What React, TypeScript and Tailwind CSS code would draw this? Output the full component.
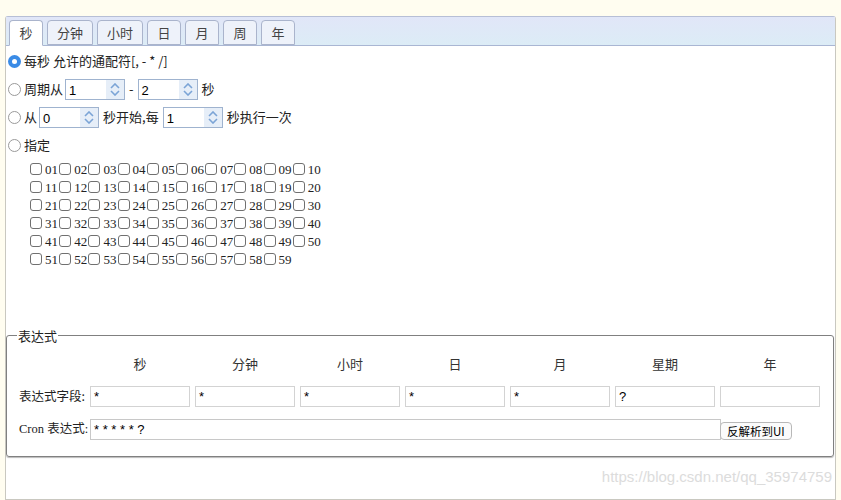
import React from 'react';

const serif = { fontFamily: '"Liberation Serif", "Noto Sans CJK SC", serif' };

const Radio = ({ checked }: { checked?: boolean }) =>
  checked ? (
    <span className="inline-flex w-[13px] h-[13px] rounded-full bg-[#3a8be6] items-center justify-center shrink-0">
      <span className="w-[5px] h-[5px] rounded-full bg-white" />
    </span>
  ) : (
    <span className="inline-block w-[13px] h-[13px] rounded-full border border-[#9a9a9a] bg-white shrink-0" />
  );

const Spinner = ({ value }: { value: string }) => (
  <span className="inline-flex w-[60px] h-[21px] border border-[#9fb3cf] bg-white items-stretch">
    <span className="flex-1 pl-[3px] pt-[3px] text-[13px] leading-[16px] text-black" style={{ fontFamily: '"Liberation Sans", Arial, sans-serif' }}>
      {value}
    </span>
    <span className="w-[18px] bg-[#e6eef8] flex flex-col items-center justify-center gap-[1px]">
      <svg width="10" height="6" viewBox="0 0 10 6"><path d="M1 5 L5 1 L9 5" fill="none" stroke="#7ba4d6" strokeWidth="1.6" /></svg>
      <svg width="10" height="6" viewBox="0 0 10 6"><path d="M1 1 L5 5 L9 1" fill="none" stroke="#7ba4d6" strokeWidth="1.6" /></svg>
    </span>
  </span>
);

const tabs = [
  { t: '秒', w: 'w-[34px]' },
  { t: '分钟', w: 'w-[46px]' },
  { t: '小时', w: 'w-[46px]' },
  { t: '日', w: 'w-[34px]' },
  { t: '月', w: 'w-[34px]' },
  { t: '周', w: 'w-[34px]' },
  { t: '年', w: 'w-[34px]' },
];

const rows = [0, 1, 2, 3, 4, 5].map((r) =>
  Array.from({ length: 10 }, (_, c) => r * 10 + c + 1).filter((n) => n <= 59)
);

const cols = ['秒', '分钟', '小时', '日', '月', '星期', '年'];
const fields = ['*', '*', '*', '*', '*', '?', ''];

export default function App() {
  return (
    <div className="w-[841px] h-[500px] bg-[#fffdf0] pt-4 overflow-hidden text-[13px] text-[#222]" style={{ fontFamily: '"Noto Sans CJK SC", "Liberation Sans", sans-serif' }}>
      <div className="ml-[5px] w-[831px] h-[484px] bg-white border border-[#c9c8c0] border-t-[#b7bfd6] rounded-t-[3px] flex flex-col">
        {/* tab header */}
        <div className="h-[29px] bg-gradient-to-b from-[#e1e6f8] to-[#dcecf6] border-b border-[#a9b6d3] flex items-end pl-[3px] gap-[4px]">
          {tabs.map((tab, i) => (
            <div
              key={tab.t}
              className={`${tab.w} h-[25px] rounded-t-[4px] border border-[#aab4cc] flex items-center justify-center text-[13px] text-[#444] ${
                i === 0 ? 'bg-white border-b-white -mb-px h-[26px]' : 'bg-[#eef2fa]'
              }`}
            >
              {tab.t}
            </div>
          ))}
        </div>

        <div className="pl-[2px] pt-[1px] flex flex-col">
          <div className="h-[28px] flex items-center gap-[3px]">
            <Radio checked />
            <span>每秒 允许的通配符[, - * /]</span>
          </div>
          <div className="h-[28px] flex items-center gap-[1px]">
            <Radio />
            <span className="mr-[1px] ml-[2px]">周期从</span>
            <Spinner value="1" />
            <span className="mx-[3px]">-</span>
            <Spinner value="2" />
            <span className="ml-[3px]">秒</span>
          </div>
          <div className="h-[28px] flex items-center gap-[1px]">
            <Radio />
            <span className="mr-[1px] ml-[2px]">从</span>
            <Spinner value="0" />
            <span className="mx-[3px]">秒开始,每</span>
            <Spinner value="1" />
            <span className="ml-[3px]">秒执行一次</span>
          </div>
          <div className="h-[28px] flex items-center gap-[3px]">
            <Radio />
            <span>指定</span>
          </div>

          <div className="pl-[22px] pt-[1px] flex flex-col text-[13px]" style={serif}>
            {rows.map((row, ri) => (
              <div key={ri} className="h-[18px] flex items-center">
                {row.map((n) => (
                  <div key={n} className="w-[29.2px] flex items-center shrink-0">
                    <span className="w-[12px] h-[12px] rounded-[3px] border border-[#707070] bg-white shrink-0" />
                    <span className="ml-[3px] leading-none">{String(n).padStart(2, '0')}</span>
                  </div>
                ))}
              </div>
            ))}
          </div>
        </div>

        {/* expression fieldset */}
        <fieldset className="mt-[58px] w-[828px] border-[1.5px] border-[#808080] rounded-[3px] pl-[12px] pr-[12px] pb-[16px] pt-[8px] shadow-[0_1px_1px_#bbb]">
          <legend className="-ml-[2px] px-[1px] text-[13px] text-[#222]">表达式</legend>
          <div className="grid grid-cols-[66px_repeat(7,100px)] gap-x-[5px] items-center text-[13px]">
            <div />
            {cols.map((c) => (
              <div key={c} className="h-[20px] text-center text-[#333]">{c}</div>
            ))}
            <div className="h-[21px] mt-[12px] flex items-center whitespace-nowrap text-[12.5px]">表达式字段:</div>
            {fields.map((f, i) => (
              <div key={i} className="mt-[12px] h-[21px] border border-[#d3d3d3] bg-white pl-[3px] text-[13px] leading-[19px] text-black" style={{ fontFamily: '"Liberation Sans", Arial, sans-serif' }}>
                {f}
              </div>
            ))}
          </div>
          <div className="mt-[12px] flex items-center">
            <span className="w-[71px] shrink-0 whitespace-nowrap text-[12.5px]" style={serif}>Cron 表达式:</span>
            <div className="w-[631px] h-[21px] border border-[#c8c8c8] bg-white pl-[3px] leading-[19px] text-black text-[13px]" style={{ fontFamily: '"Liberation Sans", Arial, sans-serif' }}>
              * * * * * ?
            </div>
            <button className="-ml-px mt-[3px] h-[18px] px-[6px] rounded-[4px] border border-[#b8b8b8] bg-[#fbfbfb] text-[11.5px] leading-[16px] text-black whitespace-nowrap">
              反解析到UI
            </button>
          </div>
        </fieldset>

        <div className="flex justify-end pr-[3px] pt-[10px]">
          <span className="text-[15px] leading-[20px] text-[#dcdcdc]" style={{ fontFamily: '"Liberation Sans", Arial, sans-serif' }}>
            https://blog.csdn.net/qq_35974759
          </span>
        </div>
      </div>
    </div>
  );
}
